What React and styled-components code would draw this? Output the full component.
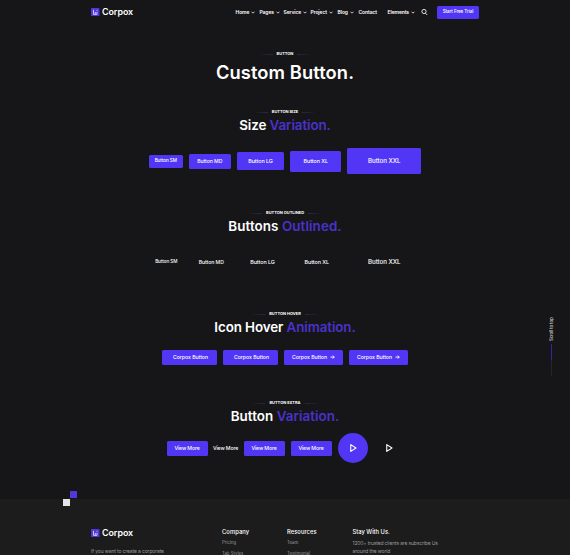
import React from "react";
import styled, { createGlobalStyle } from "styled-components";

const Global = createGlobalStyle`
  * { box-sizing: border-box; }
  html, body { margin: 0; background: #161618; overflow: hidden; }
  body { font-family: Inter, "Open Sans", sans-serif; color: #fff; }
`;

const Page = styled.div`
  position: relative;
  width: 570px;
  height: 555px;
  overflow: hidden;
  display: flex;
  flex-direction: column;
  background: #161618;
`;

const Header = styled.header`
  height: 24px;
  flex: none;
  display: flex;
  align-items: center;
  padding: 0 91px;
`;

const Brand = styled.div`
  display: flex;
  align-items: center;
  gap: 2.5px;
  font-size: 8.9px;
  line-height: 10px;
  font-weight: 600;
  letter-spacing: -0.05px;
`;

const Nav = styled.nav`
  display: flex;
  align-items: center;
  margin-left: auto;
`;

const NavItem = styled.a`
  flex: none;
  width: ${(p) => p.$w}px;
  display: flex;
  align-items: center;
  gap: 2px;
  font-size: 5px;
  line-height: 8px;
  font-weight: 600;
  letter-spacing: -0.1px;
  white-space: nowrap;
`;

const SearchIcon = styled.svg`
  flex: none;
  width: 7px;
  height: 7px;
  margin-right: 9px;
`;

const Button = styled.button`
  flex: none;
  display: flex;
  align-items: center;
  justify-content: center;
  gap: 3px;
  width: ${(p) => p.$w}px;
  height: ${(p) => p.$h}px;
  padding: 1px 0 0 ${(p) => p.$shift ?? 0}px;
  border: 0;
  border-radius: 1.5px;
  background: ${(p) => (p.$plain ? "transparent" : "#5236f5")};
  color: #fff;
  font-family: inherit;
  font-size: ${(p) => p.$size ?? 5.2}px;
  font-weight: 500;
  letter-spacing: ${(p) => p.$track ?? -0.05}px;
  line-height: 1;
  white-space: nowrap;
`;

const Section = styled.section`
  flex: none;
  height: ${(p) => p.$h}px;
  padding-top: ${(p) => p.$top ?? 0}px;
  display: flex;
  flex-direction: column;
  align-items: center;
`;

const Eyebrow = styled.div`
  display: flex;
  align-items: center;
  gap: 4px;
  height: 6px;
  font-size: 4px;
  line-height: 6px;
  font-weight: 700;
  letter-spacing: -0.02px;
  text-transform: uppercase;
  white-space: nowrap;
  &::before, &::after {
    content: "";
    width: 12px;
    height: 1px;
    background: linear-gradient(to right, #1b1a24, #2b2843);
  }
  &::after { transform: scaleX(-1); }
`;

const PageTitle = styled.h1`
  margin: 4px 0 0;
  font-size: 18.3px;
  line-height: 22px;
  font-weight: 600;
  letter-spacing: 0.1px;
`;

const Title = styled.h2`
  margin: 1px 0 0;
  font-size: 13.4px;
  line-height: 18px;
  font-weight: 600;
  letter-spacing: ${(p) => p.$track ?? 0}px;
  white-space: nowrap;
  span { color: #4932c9; }
`;

const Row = styled.div`
  height: 30px;
  margin-top: ${(p) => p.$top}px;
  display: flex;
  align-items: center;
  gap: 6px;
`;

const Round = styled.button`
  flex: none;
  width: ${(p) => p.$w}px;
  height: 30px;
  padding: 0;
  border: 0;
  border-radius: 50%;
  display: flex;
  align-items: center;
  justify-content: center;
  background: ${(p) => (p.$plain ? "transparent" : "#5236f5")};
`;

const Footer = styled.footer`
  flex: 1;
  display: grid;
  grid-template-columns: 131px 65px 65.5px 110px;
  align-items: start;
  padding: 29px 0 0 91px;
  background: #1c1c1c;
`;

const FooterColumn = styled.div`
  display: flex;
  flex-direction: column;
  gap: ${(p) => p.$gap}px;
`;

const FooterHeading = styled.h3`
  margin: 0;
  font-size: 5.8px;
  line-height: 8px;
  font-weight: 500;
  letter-spacing: ${(p) => p.$track ?? 0.1}px;
`;

const FooterText = styled.div`
  font-size: ${(p) => p.$size ?? 4.3}px;
  line-height: 8px;
  letter-spacing: ${(p) => p.$track ?? 0}px;
  color: #9a9a9c;
  white-space: nowrap;
`;

const ScrollTop = styled.div`
  position: absolute;
  left: 547px;
  top: 316px;
  width: 9px;
  display: flex;
  flex-direction: column;
  align-items: center;
  gap: 3px;
  span {
    height: 25px;
    writing-mode: vertical-rl;
    transform: rotate(180deg);
    font-size: 4.3px;
    line-height: 9px;
    font-weight: 500;
    letter-spacing: -0.08px;
    color: #d0d0d2;
    white-space: nowrap;
  }
  i {
    width: 1px;
    height: 32px;
    background: linear-gradient(#3127a0 0 48%, #252528 54%);
  }
`;

const Square = styled.div`
  position: absolute;
  left: ${(p) => p.$x}px;
  top: ${(p) => p.$y}px;
  width: 7px;
  height: 7px;
  background: ${(p) => p.$color};
`;

const Logo = () => (
  <svg width="8.5" height="8.5" viewBox="0 0 24 24">
    <rect width="24" height="24" rx="2" fill="#4f38d5" />
    <path d="M7 5v13h10V11M12 11v7" stroke="#d9d4ff" strokeWidth="2.6" fill="none" />
    <circle cx="17" cy="6.5" r="1.6" fill="#d9d4ff" />
  </svg>
);

const Chevron = () => (
  <svg width="4" height="4" viewBox="0 0 8 8">
    <path d="M1 3.4 4 6.4l3-3" fill="none" stroke="#e0e0e0" strokeWidth="1.8" />
  </svg>
);

const Arrow = () => (
  <svg width="5" height="5" viewBox="0 0 10 10">
    <path d="M1 4.2h7.5M5.5 1.2l3 3-3 3" fill="none" stroke="#fff" strokeWidth="1.8" />
  </svg>
);

const Play = () => (
  <svg width="8" height="10" viewBox="0 0 16 20">
    <path d="M3.5 3.2 14 10 3.5 16.8Z" fill="none" stroke="#fff" strokeWidth="2.2" strokeLinejoin="round" />
  </svg>
);

const nav = [
  ["Home", 24, true],
  ["Pages", 24, true],
  ["Service", 27, true],
  ["Project", 27, true],
  ["Blog", 21, true],
  ["Contact", 29, false],
  ["Elements", 33.5, true],
];

const sizes = [
  { label: "Button SM", w: 34, h: 13, size: 4.6, nudge: 1 },
  { label: "Button MD", w: 42, h: 15, size: 5.1, nudge: 3 },
  { label: "Button LG", w: 47.5, h: 18, size: 5.4, nudge: 4 },
  { label: "Button XL", w: 51, h: 21, size: 5.4, nudge: 2 },
  { label: "Button XXL", w: 74, h: 26.5, size: 6.2, nudge: 0 },
];

export default function App() {
  return (
    <Page>
      <Global />
      <Header>
        <Brand><Logo />Corpox</Brand>
        <Nav>
          {nav.map(([label, w, menu]) => (
            <NavItem key={label} $w={w}>{label}{menu && <Chevron />}</NavItem>
          ))}
          <SearchIcon viewBox="0 0 14 14">
            <circle cx="6" cy="5" r="4.2" fill="none" stroke="#fff" strokeWidth="1.7" />
            <path d="m9 8.5 3.5 3.5" stroke="#fff" strokeWidth="1.7" />
          </SearchIcon>
          <Button $w={42} $h={13} $size={4.6} $track={-0.1}>Start Free Trial</Button>
        </Nav>
      </Header>

      <Section $h={85} $top={27}>
        <Eyebrow>Button</Eyebrow>
        <PageTitle>Custom Button.</PageTitle>
      </Section>

      <Section $h={101}>
        <Eyebrow>Button Size</Eyebrow>
        <Title $track={-0.1}>Size <span>Variation.</span></Title>
        <Row $top={12}>
          {sizes.map(({ label, w, h, size }) => (
            <Button key={label} $w={w} $h={h} $size={size}>{label}</Button>
          ))}
        </Row>
      </Section>

      <Section $h={101}>
        <Eyebrow>Button Outlined</Eyebrow>
        <Title $track={0.08}>Buttons <span>Outlined.</span></Title>
        <Row $top={12}>
          {sizes.map(({ label, w, h, size, nudge }) => (
            <Button key={label} $plain $w={w} $h={h} $size={size} $shift={nudge}>{label}</Button>
          ))}
        </Row>
      </Section>

      <Section $h={89}>
        <Eyebrow>Button Hover</Eyebrow>
        <Title $track={-0.1}>Icon Hover <span>Animation.</span></Title>
        <Row $top={6}>
          <Button $w={55} $h={15} $shift={2}>Corpox Button</Button>
          <Button $w={55} $h={15} $shift={2}>Corpox Button</Button>
          <Button $w={59} $h={15}>Corpox Button<Arrow /></Button>
          <Button $w={59} $h={15}>Corpox Button<Arrow /></Button>
        </Row>
      </Section>

      <Section $h={99}>
        <Eyebrow>Button Extra</Eyebrow>
        <Title $track={0.04}>Button <span>Variation.</span></Title>
        <Row $top={8}>
          <Button $w={41} $h={15} $track={-0.14}>View More</Button>
          <Button $plain $w={24} $h={15} $track={-0.14}>View More</Button>
          <Button $w={41} $h={15} $track={-0.14}>View More</Button>
          <Button $w={41} $h={15} $track={-0.14}>View More</Button>
          <Round $w={30}><Play /></Round>
          <Round $plain $w={30}><Play /></Round>
        </Row>
      </Section>

      <Footer>
        <FooterColumn $gap={9}>
          <Brand><Logo />Corpox</Brand>
          <FooterText $size={5} $track={-0.13}>If you want to create a corporate</FooterText>
        </FooterColumn>
        <FooterColumn $gap={3}>
          <FooterHeading>Company</FooterHeading>
          <FooterText>Pricing</FooterText>
          <FooterText>Tab Styles</FooterText>
        </FooterColumn>
        <FooterColumn $gap={3}>
          <FooterHeading $track={0.05}>Resources</FooterHeading>
          <FooterText>Team</FooterText>
          <FooterText>Testimonial</FooterText>
        </FooterColumn>
        <FooterColumn $gap={3}>
          <FooterHeading $track={0}>Stay With Us.</FooterHeading>
          <FooterText $size={5} $track={-0.15}>1200+ trusted clients are subscribe Us<br />around the world</FooterText>
        </FooterColumn>
      </Footer>

      <Square $x={70} $y={491} $color="#5139d8" />
      <Square $x={63} $y={499} $color="#e4e4e4" />
      <ScrollTop><span>Scroll to top</span><i /></ScrollTop>
    </Page>
  );
}
